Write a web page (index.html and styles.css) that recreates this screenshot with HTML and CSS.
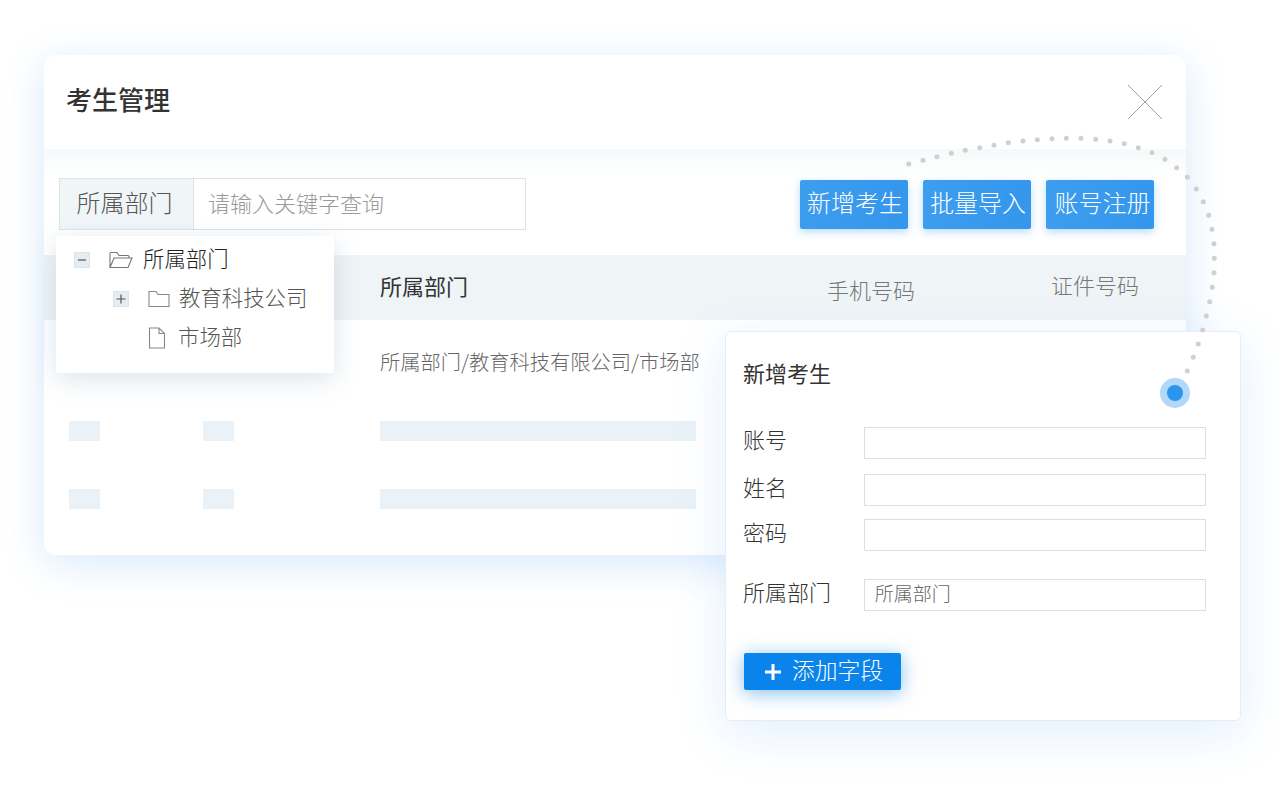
FILE: index.html
```html
<!DOCTYPE html>
<html lang="zh-CN">

<head>
    <meta charset="UTF-8">
    <title>考生管理</title>
    <link rel="stylesheet" href="styles.css">
</head>

<body>

    <div class="stage">
        <div class="window">
            <div class="window-head">
                <h1>考生管理</h1>
                <svg class="close" width="34" height="34" viewBox="0 0 34 34">
                    <path d="M0 0L34 34M34 0L0 34" stroke="#a0a0a0" stroke-width="1" fill="none" />
                </svg>
            </div>

            <div class="toolbar">
                <div class="search">
                    <span class="search-label">所属部门</span>
                    <span class="search-input">请输入关键字查询</span>
                </div>
                <div class="actions">
                    <button>新增考生</button>
                    <button>批量导入</button>
                    <button class="register">账号注册</button>
                </div>
            </div>

            <div class="table-head">
                <span class="dept-head">所属部门</span>
                <span class="phone-head">手机号码</span>
                <span class="id-head">证件号码</span>
            </div>
            <div class="table-row first-row">
                <span class="dept-path">所属部门/教育科技有限公司/市场部</span>
            </div>
            <div class="table-row">
                <i class="bar short"></i>
                <i class="bar short"></i>
                <i class="bar long"></i>
            </div>
            <div class="table-row">
                <i class="bar short"></i>
                <i class="bar short"></i>
                <i class="bar long"></i>
            </div>
        </div>

        <div class="tree">
            <div class="tree-item">
                <span class="toggle">
                    <svg width="16" height="16" viewBox="0 0 16 16"><path d="M4 8H12" stroke="#555" stroke-width="1.2" /></svg>
                </span>
                <svg class="tree-icon" width="24" height="18" viewBox="0 0 24 18">
                    <path d="M1 16.5V2.5Q1 1.500 2 1.500H8L10 4.500H19Q20 4.500 20 5.500V7M1 16.500L5 7H23L19 16.500Z" fill="none" stroke="#777" stroke-width="1.100" />
                </svg>
                <span class="tree-root">所属部门</span>
            </div>
            <div class="tree-item child">
                <span class="toggle">
                    <svg width="16" height="16" viewBox="0 0 16 16"><path d="M3.500 8H12.500M8 3.500V12.500" stroke="#555" stroke-width="1.200" /></svg>
                </span>
                <svg class="tree-icon" width="22" height="18" viewBox="0 0 22 18">
                    <path d="M1 16.500V1.500H8L10 4.500H21V16.500Z" fill="none" stroke="#888" stroke-width="1.100" />
                </svg>
                <span>教育科技公司</span>
            </div>
            <div class="tree-item leaf">
                <svg class="tree-icon" width="18" height="22" viewBox="0 0 18 22">
                    <path d="M1.500 1H11L16.500 6.500V21H1.500ZM11 1V6.500H16.500" fill="none" stroke="#888" stroke-width="1.100" />
                </svg>
                <span>市场部</span>
            </div>
        </div>

        <div class="add-panel">
            <h2>新增考生</h2>
            <div class="field first-field"><label>账号</label><div class="box"></div></div>
            <div class="field name-field"><label>姓名</label><div class="box"></div></div>
            <div class="field pwd-field"><label>密码</label><div class="box"></div></div>
            <div class="field dept-field"><label>所属部门</label><div class="box">所属部门</div></div>
            <button class="add-btn">
                <svg width="16" height="16" viewBox="0 0 16 16"><path d="M0 8H16M8 0V16" stroke="#fff" stroke-width="3" /></svg>
                <span>添加字段</span>
            </button>
        </div>

        <svg class="trail" width="1280" height="790" viewBox="0 0 1280 790">
            <path d="M908.700 164h0M923 160.300h0M937 156.700h0M951.300 153.300h0M965.300 150.300h0M979.700 147.700h0M994 145.300h0M1008.300 142.700h0M1023 141h0M1037.300 139.700h0M1052 138.700h0M1066.300 138.300h0M1081 138.300h0M1095.700 139.300h0M1110 141h0M1124.300 143.700h0M1138.300 147.700h0M1152 152.700h0M1165 159.300h0M1176.700 167.700h0M1187.300 177.300h0M1196.300 189h0M1203.300 201.700h0M1208.700 215.300h0M1212 229.300h0M1214 243.700h0M1214.300 258.300h0M1214 272.700h0M1212.300 287.300h0M1209.700 301.700h0M1206.300 316h0M1202.700 330h0M1198.300 344h0M1193.300 357.300h0M1187.300 371h0" fill="none" stroke="#d0d0d0" stroke-width="5" stroke-linecap="round" />
            <circle cx="1175" cy="393" r="15" fill="#b2d8f9" />
            <circle cx="1175" cy="393" r="8" fill="#2a94ee" />
        </svg>
    </div>

</body>

</html>
```

FILE: styles.css
```css
* {
    box-sizing: border-box;
}

html,
body {
    margin: 0;
    height: 100%;
    overflow: hidden;
    background-color: #fff;
}

body {
    font-family: "Noto Sans CJK SC", "Liberation Sans", sans-serif;
    color: #333;
}

.stage {
    position: relative;
    width: 1280px;
    height: 790px;
    padding: 55px 0 0 44px;
}

.window {
    width: 1142px;
    height: 500px;
    background-color: #fff;
    border-radius: 12px;
    box-shadow: 0 8px 40px rgba(60, 150, 240, 0.2);
    overflow: hidden;
}

.window-head {
    height: 94px;
    display: flex;
    align-items: center;
    justify-content: space-between;
    padding: 0 24px 0 22px;
}

.window-head h1 {
    margin: 0;
    padding-bottom: 8px;
    font-size: 26px;
    font-weight: 500;
    color: #333;
}

.toolbar {
    height: 106px;
    display: flex;
    justify-content: space-between;
    align-items: flex-start;
    padding: 29px 32px 0 15px;
    background: linear-gradient(#f6f9fb, #fff 30px);
}

.search {
    display: flex;
    width: 467px;
    height: 52px;
    border: 1px solid #dfe3e6;
    background-color: #fff;
}

.search-label {
    width: 134px;
    padding-right: 4px;
    background-color: #f0f5f8;
    border-right: 1px solid #dfe3e6;
    font-size: 24px;
    font-weight: 300;
    line-height: 46px;
    text-align: center;
    color: #555;
}

.search-input {
    padding-left: 14px;
    font-size: 22px;
    font-weight: 300;
    line-height: 46px;
    color: #999;
}

.actions {
    display: flex;
    gap: 15px;
    margin-top: 2px;
}

.actions button {
    width: 108px;
    height: 49px;
    padding: 0 0 6px 2px;
    border: none;
    border-radius: 2px;
    background: linear-gradient(100deg, #3d9eef, #3496ec);
    box-shadow: 0 3px 8px rgba(58, 155, 238, 0.35);
    color: #fff;
    font-family: inherit;
    font-size: 24px;
    font-weight: 300;
}

.actions .register {
    padding-left: 5px;
}

.table-head {
    position: relative;
    height: 65px;
    background-color: #eff4f7;
    font-size: 22px;
    font-weight: 300;
}

.table-head span {
    position: absolute;
}

.dept-head {
    left: 336px;
    top: 14px;
    color: #333;
    font-weight: 400;
}

.phone-head {
    left: 783px;
    top: 18px;
    color: #777;
}

.id-head {
    left: 1007px;
    top: 13px;
    color: #777;
}

.table-row {
    display: flex;
    height: 68px;
    align-items: center;
    padding-left: 25px;
}

.first-row {
    height: 77px;
    padding-top: 6px;
}

.dept-path {
    margin-left: 311px;
    font-size: 20.250px;
    font-weight: 300;
    color: #666;
}

.bar {
    display: block;
    height: 20px;
    background-color: #eaf2f7;
}

.short {
    width: 31px;
    margin-right: 103px;
}

.short + .long {
    margin-left: 43px;
}

.long {
    width: 316px;
}

.tree {
    position: absolute;
    left: 56px;
    top: 236px;
    width: 278px;
    height: 137px;
    padding-top: 4px;
    background-color: #fff;
    box-shadow: 0 6px 24px rgba(80, 120, 160, 0.2);
    font-size: 21.400px;
    font-weight: 300;
    color: #555;
}

.tree-item {
    display: flex;
    align-items: center;
    height: 39px;
    padding-left: 18px;
}

.tree-item span:last-child {
    padding-bottom: 4px;
}

.tree-root {
    color: #222;
    margin-left: 10px;
}

.toggle {
    display: flex;
    flex-shrink: 0;
    width: 16px;
    height: 16px;
    background-color: #e6edf2;
    box-shadow: inset 0 0 0 1px #dbe4ea;
    margin-right: 19px;
}

.child {
    padding-left: 57px;
}

.child .tree-icon {
    margin-right: 9px;
}

.leaf {
    padding-left: 92px;
}

.leaf .tree-icon {
    margin-right: 12px;
}

.add-panel {
    position: absolute;
    left: 725px;
    top: 331px;
    width: 516px;
    height: 390px;
    padding: 0 34px 0 17px;
    background-color: #fff;
    border: 1px solid #e4eef6;
    border-radius: 6px;
    box-shadow: 0 12px 50px rgba(60, 150, 240, 0.15);
}

.add-panel h2 {
    margin: 24px 0 0;
    font-size: 22px;
    line-height: 32px;
    font-weight: 400;
    color: #333;
}

.field {
    display: flex;
    align-items: center;
    height: 32px;
    margin-top: 14px;
    font-size: 22px;
    font-weight: 300;
    color: #333;
}

.first-field {
    margin-top: 39px;
}

.name-field {
    margin-top: 15px;
}

.pwd-field {
    margin-top: 13px;
}

.dept-field {
    margin-top: 28px;
}

.field label {
    width: 121px;
    padding-bottom: 9px;
}

.first-field label {
    padding-bottom: 11px;
}

.box {
    width: 343px;
    height: 32px;
    border: 1px solid #dcdfe2;
    padding-left: 10px;
    font-size: 19px;
    line-height: 26px;
    color: #666;
}

.add-btn {
    display: flex;
    align-items: center;
    gap: 11px;
    width: 157px;
    height: 37px;
    margin: 42px 0 0 1px;
    padding: 0 0 0 21px;
    border: none;
    border-radius: 2px;
    background-color: #0a84ea;
    box-shadow: 0 3px 18px rgba(10, 132, 234, 0.5);
    color: #fff;
    font-family: inherit;
    font-size: 22.800px;
    font-weight: 300;
}

.add-btn span {
    padding-bottom: 5px;
}

.trail {
    position: absolute;
    left: 0;
    top: 0;
    pointer-events: none;
}
```
